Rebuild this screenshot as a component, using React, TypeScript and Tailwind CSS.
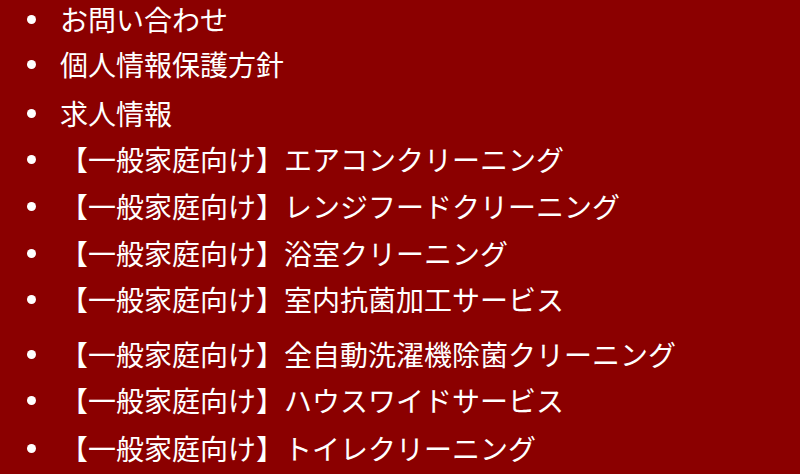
const items: { label: string; gap: string }[] = [
  { label: 'お問い合わせ', gap: 'mt-0' },
  { label: '個人情報保護方針', gap: '-mt-[1px]' },
  { label: '求人情報', gap: 'mt-[3px]' },
  { label: '【一般家庭向け】エアコンクリーニング', gap: 'mt-0' },
  { label: '【一般家庭向け】レンジフードクリーニング', gap: 'mt-[1px]' },
  { label: '【一般家庭向け】浴室クリーニング', gap: 'mt-[1px]' },
  { label: '【一般家庭向け】室内抗菌加工サービス', gap: 'mt-0' },
  { label: '【一般家庭向け】全自動洗濯機除菌クリーニング', gap: 'mt-[9px]' },
  { label: '【一般家庭向け】ハウスワイドサービス', gap: 'mt-0' },
  { label: '【一般家庭向け】トイレクリーニング', gap: 'mt-[2px]' },
];

export default function App() {
  return (
    <div
      className="w-[800px] h-[474px] overflow-hidden bg-[#8b0000] text-white"
      style={{ fontFamily: '"Noto Sans CJK JP", "Noto Sans", sans-serif' }}
    >
      <ul className="-mt-[4px] pl-[27px]">
        {items.map((it, i) => (
          <li key={i} className={`flex items-center h-[46px] ${it.gap}`}>
            <span className="w-[9px] h-[9px] rounded-full bg-white shrink-0" />
            <span className="ml-[24px] text-[28px] leading-none whitespace-nowrap">{it.label}</span>
          </li>
        ))}
      </ul>
    </div>
  );
}
